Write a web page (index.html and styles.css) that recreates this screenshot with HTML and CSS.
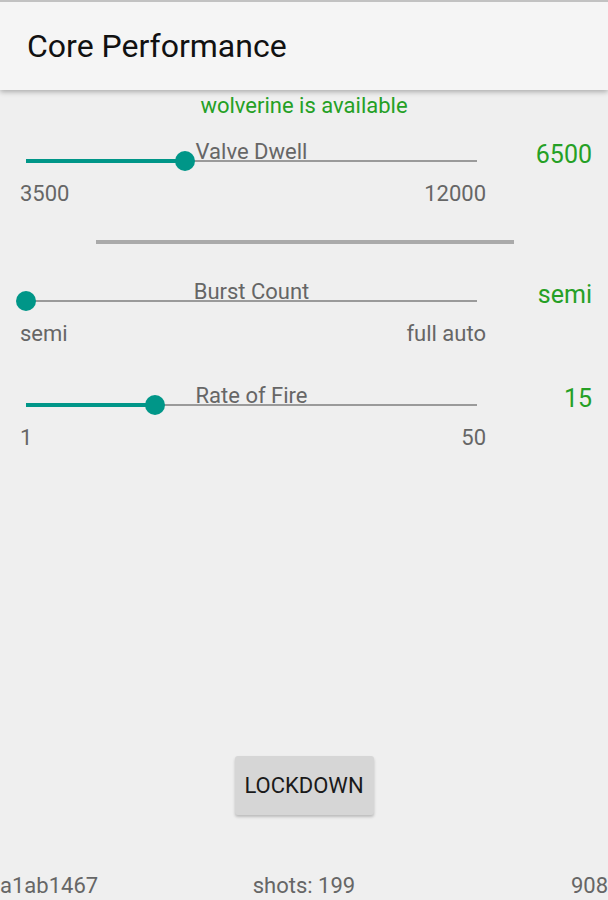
FILE: index.html
```html
<!DOCTYPE html>
<html lang="en">
<head>
  <meta charset="UTF-8" />
  <meta name="viewport" content="width=device-width, initial-scale=1.0"/>
  <title>Core Performance</title>
  <link rel="stylesheet" href="styles.css">
</head>
<body>
  <header class="appbar">
    <h1>Core Performance</h1>
  </header>

  <main class="content">
    <div class="status">wolverine is available</div>

    <section class="setting">
      <div class="row">
        <div class="track">
          <span class="label">Valve Dwell</span>
          <div class="fill" style="width: 35.3%"><span class="thumb"></span></div>
        </div>
        <div class="value">6500</div>
      </div>
      <div class="range">
        <span>3500</span>
        <span>12000</span>
      </div>
    </section>

    <hr class="divider">

    <section class="setting">
      <div class="row">
        <div class="track">
          <span class="label">Burst Count</span>
          <div class="fill" style="width: 0%"><span class="thumb"></span></div>
        </div>
        <div class="value">semi</div>
      </div>
      <div class="range">
        <span>semi</span>
        <span>full auto</span>
      </div>
    </section>

    <section class="setting">
      <div class="row">
        <div class="track">
          <span class="label">Rate of Fire</span>
          <div class="fill" style="width: 28.6%"><span class="thumb"></span></div>
        </div>
        <div class="value">15</div>
      </div>
      <div class="range">
        <span>1</span>
        <span>50</span>
      </div>
    </section>

    <div class="actions">
      <button class="lockdown">LOCKDOWN</button>
    </div>
  </main>

  <footer class="footer">
    <span class="left">a1ab1467</span>
    <span class="mid">shots: 199</span>
    <span class="right">908</span>
  </footer>
</body>
</html>
```

FILE: styles.css
```css
* {
  margin: 0;
  padding: 0;
  box-sizing: border-box;
}

html, body {
  height: 100%;
}

body {
  font-family: Roboto, 'Noto Sans', sans-serif;
  background: #efefef;
  color: #666;
  display: flex;
  flex-direction: column;
  border-top: 2px solid #c2c2c2;
  overflow: hidden;
}

.appbar {
  background: #f5f5f5;
  height: 88px;
  flex-shrink: 0;
  padding-left: 27px;
  display: flex;
  align-items: center;
  box-shadow: 0 2px 5px rgba(0, 0, 0, 0.28);
  position: relative;
  z-index: 1;
}

.appbar h1 {
  font-size: 32px;
  font-weight: 400;
  color: #111;
}

.content {
  flex: 1;
  display: flex;
  flex-direction: column;
}

.status {
  text-align: center;
  color: #25a025;
  font-size: 22px;
  line-height: 24px;
  margin-top: 4px;
}

.setting {
  padding-left: 26px;
  margin-top: 14px;
}

.row {
  display: flex;
  align-items: flex-end;
}

.track {
  position: relative;
  width: 451px;
  height: 30px;
  border-bottom: 2px solid #9a9a9a;
  display: flex;
  align-items: flex-end;
  justify-content: center;
}

.label {
  font-size: 22px;
  line-height: 26px;
  color: #666;
  margin-bottom: -5px;
}

.fill {
  position: absolute;
  left: 0;
  bottom: -3px;
  height: 4px;
  background: #009688;
}

.thumb {
  position: absolute;
  right: -10px;
  top: -8px;
  width: 20px;
  height: 20px;
  border-radius: 50%;
  background: #009688;
}

.value {
  flex: 1;
  text-align: right;
  padding-right: 16px;
  font-size: 25px;
  line-height: 28px;
  color: #25a025;
  margin-bottom: -7px;
}

.range {
  display: flex;
  justify-content: space-between;
  width: 466px;
  margin-left: -6px;
  font-size: 22px;
  line-height: 24px;
  color: #666;
  margin-top: 20px;
}

.divider {
  border: none;
  height: 4px;
  background: #aaa;
  width: 418px;
  margin: 34px 0 0 96px;
}

.divider + .setting {
  margin-top: 28px;
}

.setting + .setting {
  margin-top: 30px;
}

.actions {
  flex: 1;
  display: flex;
  justify-content: center;
  align-items: flex-end;
  padding-bottom: 59px;
}

.lockdown {
  font-family: Roboto, 'Noto Sans', sans-serif;
  font-size: 22px;
  color: #1a1a1a;
  background: #d6d6d6;
  border: none;
  border-radius: 3px;
  width: 139px;
  height: 59px;
  box-shadow: 0 2px 3px rgba(0, 0, 0, 0.22);
}

.footer {
  display: grid;
  grid-template-columns: 1fr auto 1fr;
  font-size: 22px;
  line-height: 24px;
  color: #666;
  height: 26px;
  flex-shrink: 0;
}

.footer .right {
  text-align: right;
}
```
